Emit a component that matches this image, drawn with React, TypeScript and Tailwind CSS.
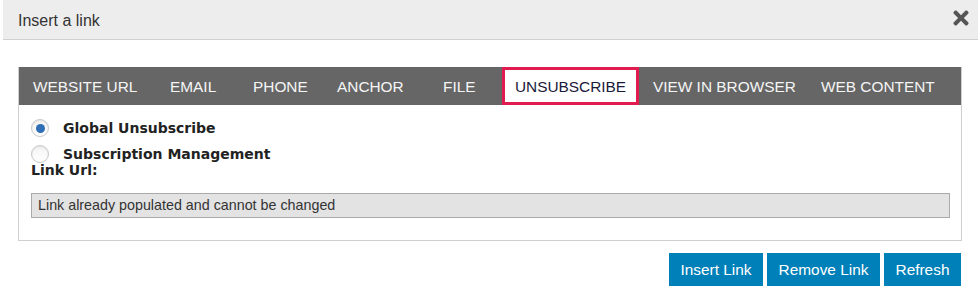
import React from "react";
import { FaTimes } from "react-icons/fa";

const tabs = [
  { label: "WEBSITE URL", w: "w-[137px]" },
  { label: "EMAIL", w: "w-[83px]" },
  { label: "PHONE", w: "w-[84px]" },
  { label: "ANCHOR", w: "w-[106px]" },
  { label: "FILE", w: "w-[73px]" },
];
const tabs2 = [
  { label: "VIEW IN BROWSER", w: "w-[168px]" },
  { label: "WEB CONTENT", w: "w-[140px]" },
];

function Radio({ checked }: { checked?: boolean }) {
  return (
    <div className="w-[18px] h-[18px] rounded-full border border-[#c8c8c8] bg-gradient-to-b from-[#f4f4f4] to-[#ffffff] flex items-center justify-center shadow-[inset_0_1px_2px_rgba(0,0,0,0.08)]">
      {checked && <div className="w-[9px] h-[9px] rounded-full bg-[#2f6fb5]" />}
    </div>
  );
}

export default function App() {
  return (
    <div className="w-[978px] h-[303px] bg-white font-['Liberation_Sans',Arial,sans-serif] overflow-hidden">
      <div className="ml-[3px] h-[40px] bg-[#ededed] border-b border-[#d0d0d0] flex items-center justify-between pl-[15px] pr-[6px]">
        <span className="text-[16px] text-[#333] pt-[2px]">Insert a link</span>
        <FaTimes className="text-[#555] w-[22px] h-[22px] -mt-[3px]" />
      </div>
      <div className="ml-[18px] mt-[27px] w-[944px] border border-[#cfcfcf] border-t-0">
        <div className="h-[38px] bg-[#666666] flex items-stretch">
          {tabs.map((t) => (
            <div key={t.label} className={`${t.w} pl-[14px] pt-[2px] flex items-center text-[15.4px] text-[#f5f5f5]`}>
              {t.label}
            </div>
          ))}
          <div className="w-[137px] bg-white border-[3px] border-[#e01b50] pt-[2px] flex items-center justify-center text-[15.4px] text-[#1a1a3a]">
            UNSUBSCRIBE
          </div>
          {tabs2.map((t) => (
            <div key={t.label} className={`${t.w} pl-[14px] pt-[2px] flex items-center text-[15.4px] text-[#f5f5f5]`}>
              {t.label}
            </div>
          ))}
        </div>
        <div className="pt-[10px] pb-[22px] pl-[12px] pr-[11px] font-['DejaVu_Sans',Verdana,sans-serif] font-bold text-[14px] text-[#222]">
          <div className="h-[26px] flex items-center gap-[14px]">
            <Radio checked />
            <span>Global Unsubscribe</span>
          </div>
          <div className="h-[26px] flex items-center gap-[14px]">
            <Radio />
            <span>Subscription Management</span>
          </div>
          <div className="-mt-[4px] leading-[15px]">Link Url:</div>
          <div className="mt-[15px] h-[25px] bg-[#e3e3e3] border border-[#aaaaaa] flex items-center pl-[6px] font-['Liberation_Sans',Arial,sans-serif] font-normal text-[14.3px] text-[#333]">
            Link already populated and cannot be changed
          </div>
        </div>
      </div>
      <div className="w-[961px] mt-[12px] flex justify-end gap-[4px]">
        <button className="h-[33px] w-[94px] bg-[#0080b8] text-white text-[15.4px]">Insert Link</button>
        <button className="h-[33px] w-[113px] bg-[#0080b8] text-white text-[15.4px]">Remove Link</button>
        <button className="h-[33px] w-[77px] bg-[#0080b8] text-white text-[15.4px]">Refresh</button>
      </div>
    </div>
  );
}
